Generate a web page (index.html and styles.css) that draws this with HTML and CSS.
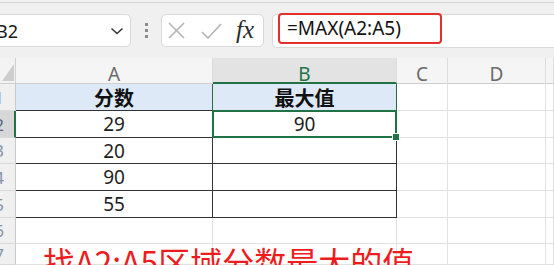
FILE: index.html
```html
<!DOCTYPE html>
<html lang="zh-CN">
<head>
<meta charset="utf-8">
<title>MAX</title>
<link rel="stylesheet" href="styles.css">
</head>
<body>
<div class="top">
  <div class="fbar">
    <div class="namebox">
      <span class="ref">B2</span>
      <svg class="chev" width="14" height="8" viewBox="0 0 14 8"><polyline points="1.5,1.5 7,6.5 12.5,1.5" fill="none" stroke="#333" stroke-width="1.5"/></svg>
    </div>
    <div class="dots"><i></i><i></i><i></i></div>
    <div class="fxbox">
      <svg class="ix" width="17" height="17" viewBox="0 0 17 17"><path d="M1 1 L16 16 M16 1 L1 16" stroke="#b4b4b4" stroke-width="1.6" fill="none"/></svg>
      <svg class="ic" width="21" height="16" viewBox="0 0 21 16"><polyline points="1,9 7,15 20,1" fill="none" stroke="#b4b4b4" stroke-width="1.6"/></svg>
      <span class="fx">fx</span>
    </div>
    <div class="formula">
      <div class="hl">=MAX(A2:A5)</div>
    </div>
  </div>
</div>
<div class="sheet">
  <div class="corner"><span class="tri"></span></div>
  <div class="ch">A</div>
  <div class="ch sel">B</div>
  <div class="ch">C</div>
  <div class="ch">D</div>
  <div class="ch"></div>

  <div class="rh"><span>1</span></div>
  <div class="c t hd gr">分数</div>
  <div class="c t hd gr">最大值</div>
  <div class="c"></div><div class="c"></div><div class="c"></div>

  <div class="rh rsel"><span>2</span></div>
  <div class="c t gr">29</div>
  <div class="c t active">90<span class="handle"></span></div>
  <div class="c"></div><div class="c"></div><div class="c"></div>

  <div class="rh"><span>3</span></div>
  <div class="c t">20</div>
  <div class="c t"></div>
  <div class="c"></div><div class="c"></div><div class="c"></div>

  <div class="rh"><span>4</span></div>
  <div class="c t">90</div>
  <div class="c t"></div>
  <div class="c"></div><div class="c"></div><div class="c"></div>

  <div class="rh"><span>5</span></div>
  <div class="c t">55</div>
  <div class="c t"></div>
  <div class="c"></div><div class="c"></div><div class="c"></div>

  <div class="rh"><span>6</span></div>
  <div class="c"></div><div class="c"></div><div class="c"></div><div class="c"></div><div class="c"></div>

  <div class="rh"><span>7</span></div>
  <div class="c note"><span>找A2:A5区域分数最大的值</span></div>
  <div class="c"></div><div class="c"></div><div class="c"></div><div class="c"></div>
</div>
</body>
</html>
```
FILE: styles.css
```css
html, body {
  margin: 0;
  padding: 0;
}
body {
  width: 554px;
  height: 265px;
  overflow: hidden;
  background: #fff;
  font-family: "Noto Sans", "Noto Sans CJK SC", sans-serif;
}
.top {
  background: #f0f0f0;
  padding-top: 2px;
}
.fbar {
  height: 56px;
  box-sizing: border-box;
  border-top: 1px solid #d6d6d6;
  padding-top: 11px;
  display: flex;
  align-items: flex-start;
}
.namebox {
  margin-left: -14px;
  width: 145px;
  height: 33px;
  box-sizing: border-box;
  background: #fff;
  border: 1px solid #d9d9d9;
  border-radius: 5px;
  display: flex;
  align-items: center;
  justify-content: space-between;
  padding: 0 6px 0 9px;
}
.ref {
  font-size: 18px;
  color: #1a1a1a;
}
.dots {
  width: 30px;
  height: 33px;
  display: flex;
  flex-direction: column;
  align-items: center;
  justify-content: center;
  gap: 3px;
}
.dots i {
  display: block;
  width: 3px;
  height: 3px;
  background: #8c8c8c;
}
.fxbox {
  width: 103px;
  height: 33px;
  box-sizing: border-box;
  background: #fff;
  border: 1px solid #d9d9d9;
  border-radius: 5px;
  display: flex;
  align-items: center;
  padding-left: 6px;
}
.ic {
  margin-left: 16px;
}
.fx {
  margin-left: 14px;
  font-family: "Liberation Serif", "DejaVu Serif", serif;
  font-style: italic;
  font-size: 25px;
  color: #2a2a2a;
  line-height: 1;
  margin-top: -2px;
}
.formula {
  margin-left: 8px;
  flex: 1;
  height: 34px;
  box-sizing: border-box;
  background: #fff;
  border: 1px solid #d9d9d9;
  border-right: none;
  border-radius: 5px 0 0 5px;
  padding-left: 5px;
  display: flex;
  align-items: flex-start;
}
.hl {
  margin-top: -2px;
  width: 164px;
  height: 31px;
  box-sizing: border-box;
  border: 2px solid #e2302a;
  border-radius: 4px;
  padding-left: 7px;
  font-size: 19px;
  line-height: 27px;
  color: #111;
}
.sheet {
  display: grid;
  grid-template-columns: 16px 197px 184px 51px 98px 8px;
  grid-template-rows: 26px 27px 27px 26px 27px 27px 26px 21px;
}
.sheet > div {
  box-sizing: border-box;
  border-right: 1px solid #e1e1e1;
  border-bottom: 1px solid #e1e1e1;
  display: flex;
  align-items: center;
  justify-content: center;
}
.corner {
  background: #f3f3f3;
  border-right-color: #cfcfcf !important;
  border-bottom-color: #cfcfcf !important;
  align-items: flex-end !important;
  justify-content: flex-end !important;
  padding: 0 1px 2px 0;
}
.tri {
  width: 0;
  height: 0;
  border-left: 12px solid transparent;
  border-bottom: 17px solid #cdcdcd;
}
.ch {
  background: #f5f5f5;
  border-right-color: #dcdcdc !important;
  border-bottom-color: #cfcfcf !important;
  font-size: 19px;
  line-height: 20px;
  color: #6b6b6b;
  padding-top: 6px;
}
.ch.sel {
  background: #e3e3e3;
  color: #217346;
  border-bottom: 2px solid #217346 !important;
  padding-top: 7px;
}
.rh {
  background: #f0f0f0;
  border-right-color: #c9c9c9 !important;
  border-bottom-color: #d9d9d9 !important;
  overflow: hidden;
  justify-content: flex-end !important;
  padding-right: 11px;
  font-size: 17px;
  color: #8393ab;
}
.rh.rsel {
  background: #d7d7d7;
  border-right: 2px solid #217346 !important;
  color: #4f6786;
  padding-right: 10px;
}
.c {
  font-size: 19px;
  color: #1f1f1f;
}
.c.t {
  border-right-color: #333 !important;
  border-bottom-color: #333 !important;
}
.c.hd {
  background: #dde9f6;
  font-weight: 700;
  font-size: 20px;
  color: #111;
  font-family: "Noto Sans CJK SC", sans-serif;
}
.c.gr {
  border-right-color: #2b6a44 !important;
}
.c.active {
  position: relative;
}
.c.active::after {
  content: "";
  position: absolute;
  left: -1px;
  top: -1px;
  right: -1px;
  bottom: -1px;
  border: 2px solid #217346;
}
.handle {
  position: absolute;
  right: -4px;
  bottom: -4px;
  width: 6px;
  height: 6px;
  background: #217346;
  border: 1px solid #fff;
  z-index: 2;
}
.c.note {
  position: relative;
  z-index: 1;
  justify-content: flex-start !important;
  align-items: flex-start !important;
  overflow: visible;
  padding-left: 27px;
  padding-top: 1px;
}
.note span {
  white-space: nowrap;
  font-family: "Noto Sans CJK SC", sans-serif;
  font-size: 32px;
  line-height: 1;
  color: #ee1c1c;
}
```
